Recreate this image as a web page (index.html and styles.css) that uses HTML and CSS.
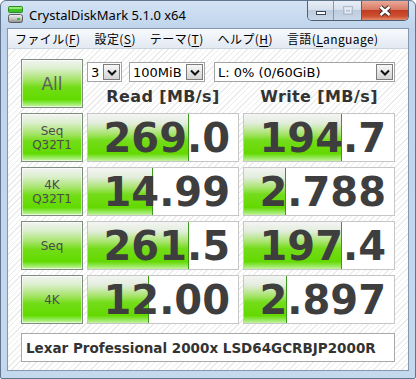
FILE: index.html
```html
<!DOCTYPE html>
<html lang="ja">
<head>
<meta charset="utf-8">
<title>CrystalDiskMark 5.1.0 x64</title>
<link rel="stylesheet" href="styles.css">
</head>
<body>
<div class="window">
  <div class="titlebar">
    <svg class="appicon" width="15" height="17" viewBox="0 0 15 17">
      <defs>
        <linearGradient id="drv" x1="0" y1="0" x2="0" y2="1">
          <stop offset="0" stop-color="#f2f2f2"/>
          <stop offset="0.5" stop-color="#c8c8c8"/>
          <stop offset="1" stop-color="#8a8a8a"/>
        </linearGradient>
      </defs>
      <rect x="0.5" y="0.5" width="14" height="6" rx="1" fill="#3fbf2a" stroke="#2d8a1e"/>
      <rect x="1" y="1" width="13" height="2" fill="#8fe874"/>
      <rect x="0.5" y="8.5" width="14" height="8" rx="2" fill="url(#drv)" stroke="#5d5d5d"/>
      <rect x="9" y="12" width="3" height="2" fill="#35c21f"/>
    </svg>
    <span class="title">CrystalDiskMark 5.1.0 x64</span>
    <div class="caption-btns">
      <div class="cb min">
        <svg width="14" height="10" viewBox="0 0 14 10"><rect x="2.5" y="5.5" width="9" height="3" fill="#fff" stroke="#3a4658"/></svg>
      </div>
      <div class="cb max">
        <svg width="14" height="12" viewBox="0 0 14 12"><rect x="2.5" y="1.5" width="9" height="8" fill="none" stroke="#aebccb"/><rect x="4.5" y="3.5" width="5" height="4" fill="none" stroke="#e6edf5"/></svg>
      </div>
      <div class="cb close">
        <svg width="16" height="12" viewBox="0 0 16 12"><path d="M3.5 2 L12.5 10 M12.5 2 L3.5 10" stroke="#3b2a28" stroke-width="4.6"/><path d="M3.5 2 L12.5 10 M12.5 2 L3.5 10" stroke="#fff" stroke-width="2.6"/></svg>
      </div>
    </div>
  </div>
  <div class="client">
    <div class="menubar">
      <span class="menu">ファイル(<u>F</u>)</span>
      <span class="menu">設定(<u>S</u>)</span>
      <span class="menu">テーマ(<u>T</u>)</span>
      <span class="menu">ヘルプ(<u>H</u>)</span>
      <span class="menu">言語(<u>L</u>anguage)</span>
    </div>
    <div class="content">
      <div class="grid">
        <div class="btn all">All</div>
        <div class="controls">
          <div class="selects">
            <div class="select s1"><span class="val">3</span><span class="arrow"><svg width="10" height="7" viewBox="0 0 10 7"><path d="M1 1.5 L5 5.5 L9 1.5" fill="none" stroke="#111" stroke-width="2"/></svg></span></div>
            <div class="select s2"><span class="val">100MiB</span><span class="arrow"><svg width="10" height="7" viewBox="0 0 10 7"><path d="M1 1.5 L5 5.5 L9 1.5" fill="none" stroke="#111" stroke-width="2"/></svg></span></div>
            <div class="select s3"><span class="val">L: 0% (0/60GiB)</span><span class="arrow"><svg width="10" height="7" viewBox="0 0 10 7"><path d="M1 1.5 L5 5.5 L9 1.5" fill="none" stroke="#111" stroke-width="2"/></svg></span></div>
          </div>
          <div class="heads">
            <div class="head">Read [MB/s]</div>
            <div class="head">Write [MB/s]</div>
          </div>
        </div>

        <div class="btn">Seq<br>Q32T1</div>
        <div class="cell"><div class="bar" style="width:67.3%"></div><div class="num">269.0</div></div>
        <div class="cell"><div class="bar" style="width:65.3%"></div><div class="num">194.7</div></div>

        <div class="btn">4K<br>Q32T1</div>
        <div class="cell"><div class="bar" style="width:43.3%"></div><div class="num">14.99</div></div>
        <div class="cell"><div class="bar" style="width:28%"></div><div class="num">2.788</div></div>

        <div class="btn">Seq</div>
        <div class="cell"><div class="bar" style="width:67.3%"></div><div class="num">261.5</div></div>
        <div class="cell"><div class="bar" style="width:65.3%"></div><div class="num">197.4</div></div>

        <div class="btn">4K</div>
        <div class="cell"><div class="bar" style="width:40.7%"></div><div class="num">12.00</div></div>
        <div class="cell"><div class="bar" style="width:28.7%"></div><div class="num">2.897</div></div>
      </div>
      <div class="name">Lexar Professional 2000x LSD64GCRBJP2000R</div>
    </div>
  </div>
</div>
</body>
</html>
```

FILE: styles.css
```css
html, body {
  margin: 0;
  padding: 0;
  background: #ffffff;
}

.window {
  width: 416px;
  height: 379px;
  box-sizing: border-box;
  border: 1px solid #61768d;
  border-radius: 6px 6px 2px 2px;
  background: linear-gradient(to bottom, #d4e3f4 0px, #bfd4ec 27px, #c4d8ee 100%);
  padding: 0 6px 7px;
  display: flex;
  flex-direction: column;
}

.titlebar {
  height: 27px;
  display: flex;
  align-items: flex-start;
  flex: none;
}

.appicon {
  margin: 5px 0 0 1px;
  flex: none;
}

.title {
  font-family: "Noto Sans", sans-serif;
  font-size: 13px;
  line-height: 18px;
  color: #000;
  margin: 5px 0 0 6px;
  white-space: nowrap;
}

.caption-btns {
  margin-left: auto;
  margin-right: 0;
  display: flex;
  height: 20px;
  box-sizing: border-box;
  border: 1px solid #4e5f75;
  border-top: none;
  border-radius: 0 0 5px 5px;
  overflow: hidden;
}

.cb {
  display: flex;
  align-items: center;
  justify-content: center;
}

.cb.min {
  width: 25px;
  background: linear-gradient(to bottom, #e8eef6 0%, #d6e0ec 45%, #bccbdd 50%, #cad8e9 100%);
  border-right: 1px solid #8597ad;
}

.cb.max {
  width: 27px;
  background: linear-gradient(to bottom, #e8eef6 0%, #d6e0ec 45%, #bccbdd 50%, #cad8e9 100%);
  border-right: 1px solid #6a5b60;
}

.cb.close {
  width: 46px;
  background: linear-gradient(to bottom, #eaa998 0%, #d87a64 45%, #c23c22 50%, #cc4f30 80%, #e38c6c 100%);
}

.client {
  flex: 1;
  border: 1px solid #8397ae;
  display: flex;
  flex-direction: column;
  background: repeating-linear-gradient(135deg, #ffffff 0px, #ffffff 3px, #ebebeb 3px, #ebebeb 4px);
}

.menubar {
  height: 19px;
  flex: none;
  border-bottom: 1px solid #c9d3df;
  background: linear-gradient(to bottom, #f8fafd, #e2e9f2);
  display: flex;
  align-items: center;
  font-family: "Noto Sans CJK JP", "Noto Sans", sans-serif;
  font-size: 12px;
  letter-spacing: 0.4px;
  color: #000;
}

.menu {
  padding: 0 7px;
  white-space: nowrap;
  line-height: 19px;
}

.menu u {
  text-decoration: underline;
  text-underline-offset: 2px;
}

.content {
  flex: 1;
  padding: 10px 13px 0;
  display: flex;
  flex-direction: column;
}

.grid {
  display: grid;
  grid-template-columns: 62px 152px 152px;
  grid-auto-rows: 49px;
  column-gap: 4px;
  row-gap: 5px;
}

.btn {
  box-sizing: border-box;
  border: 1px solid #7f8d7f;
  box-shadow: inset 0 0 0 1px rgba(255, 255, 255, 0.55);
  background: linear-gradient(to bottom, #f3f3f3 0%, #dcefcf 18%, #a6e46a 42%, #72dd16 58%, #62db00 84%, #8ae84a 91%, #c9f4a8 100%);
  display: flex;
  align-items: center;
  justify-content: center;
  text-align: center;
  font-family: "DejaVu Sans", sans-serif;
  font-size: 12px;
  line-height: 14px;
  color: #4c4c4c;
}

.btn.all {
  font-size: 17px;
  color: #5e5e5e;
}

.controls {
  grid-column: 2 / 4;
  display: flex;
  flex-direction: column;
}

.selects {
  display: flex;
  margin-top: 3px;
  height: 20px;
}

.select {
  box-sizing: border-box;
  border: 1px solid #a3a3a3;
  background: #fff;
  padding: 1px;
  display: flex;
  align-items: center;
  font-family: "DejaVu Sans", sans-serif;
  font-size: 13px;
  color: #000;
}

.s1 { width: 35px; margin-right: 7px; }
.s2 { width: 76px; margin-right: 9px; }
.s3 { width: 181px; }

.val {
  flex: 1;
  padding-left: 2px;
  white-space: nowrap;
  overflow: hidden;
}

.arrow {
  width: 17px;
  align-self: stretch;
  box-sizing: border-box;
  border: 1px solid #7c7c7c;
  background: linear-gradient(to bottom, #f7f7f7, #d3d3d3);
  display: flex;
  align-items: center;
  justify-content: center;
}

.heads {
  display: grid;
  grid-template-columns: 152px 152px;
  column-gap: 4px;
  margin-top: 6px;
}

.head {
  text-align: center;
  font-family: "DejaVu Sans", sans-serif;
  font-weight: bold;
  font-size: 16px;
  letter-spacing: 0.4px;
  line-height: 18px;
  color: #333;
  white-space: nowrap;
}

.cell {
  box-sizing: border-box;
  border: 1px solid #c6c6c6;
  background: #fff;
  display: grid;
}

.bar {
  grid-area: 1 / 1;
  justify-self: start;
  box-sizing: border-box;
  border-right: 1px solid #3d9a1c;
  background: linear-gradient(to bottom, #f4f4f4 0%, #e2eddb 20%, #a8e46e 42%, #74dc1a 56%, #64d900 84%, #8de64e 92%, #c4f2a0 100%);
}

.num {
  grid-area: 1 / 1;
  justify-self: end;
  align-self: center;
  font-family: "DejaVu Sans", sans-serif;
  font-weight: bold;
  font-size: 40px;
  line-height: 40px;
  color: #3e3e3e;
  padding-right: 8px;
}

.name {
  margin-top: 9px;
  height: 29px;
  box-sizing: border-box;
  border: 1px solid #a9a9a9;
  background: #fff;
  display: flex;
  align-items: center;
  padding-left: 4px;
  font-family: "DejaVu Sans", sans-serif;
  font-weight: bold;
  font-size: 13.5px;
  color: #333;
  white-space: nowrap;
}
```
